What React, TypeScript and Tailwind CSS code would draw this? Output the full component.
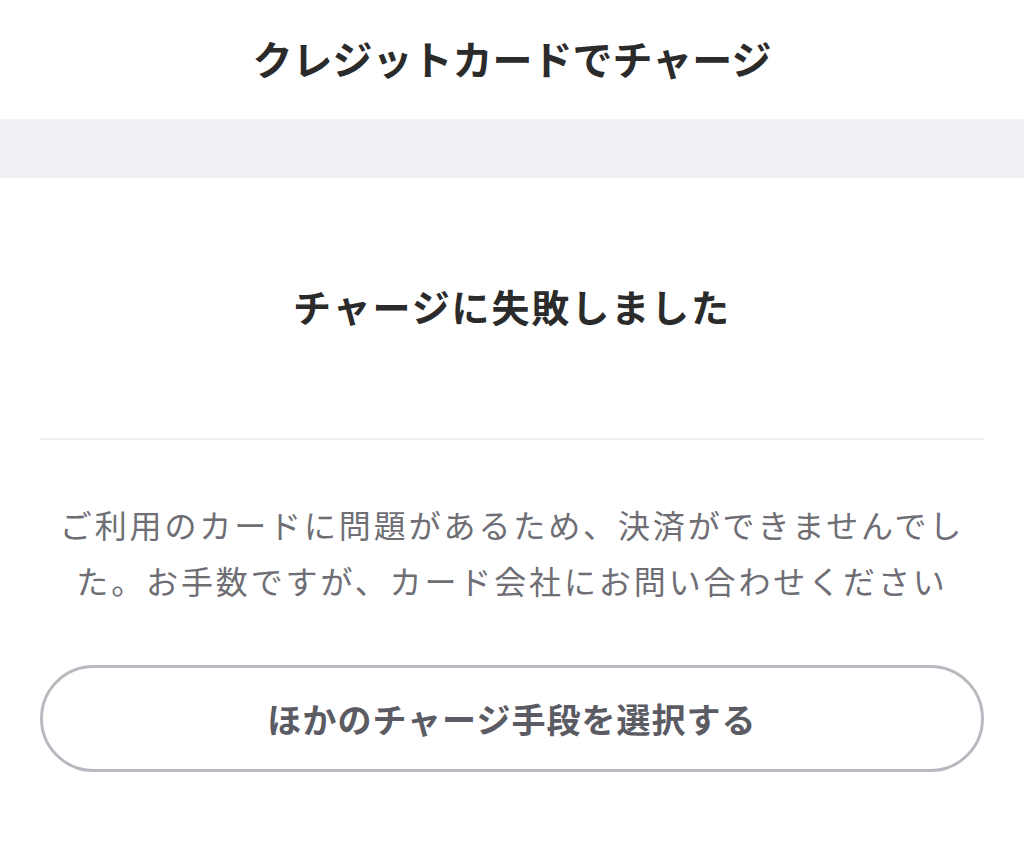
import * as React from "react";

const jp = "font-['Noto_Sans_CJK_JP','Noto_Sans',sans-serif]";

export default function App() {
  return (
    <div className={`min-h-screen w-full bg-white ${jp}`}>
      {/* Header */}
      <header className="flex h-[119px] items-center justify-center">
        <h1 className="text-[40px] font-bold leading-none tracking-normal text-[#2b2b2b] -mt-[4px]">
          クレジットカードでチャージ
        </h1>
      </header>

      {/* Gray band */}
      <div className="h-[59px] bg-[#f0f0f5]" />

      <main className="px-10">
        {/* Result */}
        <div className="flex h-[260px] items-center justify-center">
          <h2 className="text-[38px] font-bold leading-none tracking-[0.05em] text-[#2b2b2b] -mt-[4px]">
            チャージに失敗しました
          </h2>
        </div>
        <div className="h-[2px] bg-[#f2f2f6]" />

        {/* Message */}
        <p className="mt-[56px] text-center text-[32px] leading-[56px] tracking-[0.09em] text-[#6e6e74]">
          ご利用のカードに問題があるため、決済ができませんでし
          <br />
          た。お手数ですが、カード会社にお問い合わせください
        </p>

        {/* Action */}
        <button
          type="button"
          className="mt-[57px] flex h-[107px] w-full items-center justify-center rounded-full border-[3px] border-[#b9b9c0] bg-white text-[34px] font-bold tracking-[0.03em] text-[#5b5b63]"
        >
          ほかのチャージ手段を選択する
        </button>
      </main>
    </div>
  );
}
